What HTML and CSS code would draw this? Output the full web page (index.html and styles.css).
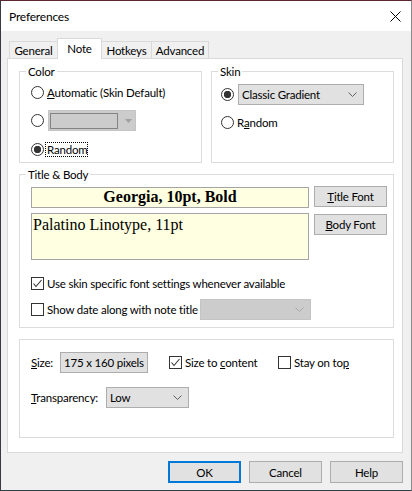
FILE: index.html
```html
<!DOCTYPE html>
<html>
<head>
<meta charset="utf-8">
<title>Preferences</title>
<link rel="stylesheet" href="styles.css">
</head>
<body>
<div class="window">
  <div class="titlebar">
    <span class="title">Preferences</span>
    <svg class="close" width="11" height="11" viewBox="0 0 11 11"><path d="M0.5 0.5L10.5 10.5M10.5 0.5L0.5 10.5" stroke="#000" stroke-width="1" fill="none"/></svg>
  </div>
  <div class="client">
    <div class="tabs">
      <div class="tab t-general">General</div>
      <div class="tab t-note active">Note</div>
      <div class="tab t-hotkeys">Hotkeys</div>
      <div class="tab t-advanced">Advanced</div>
    </div>
    <div class="panel">
      <div class="top-row">
        <div class="group g-color">
          <div class="legend">Color</div>
          <div class="opt r1"><span class="radio"></span><span class="lbl"><u>A</u>utomatic (Skin Default)</span></div>
          <div class="opt r2"><span class="radio"></span>
            <div class="combo-dis">
              <span class="swatch"></span>
              <svg class="tri" width="7" height="4" viewBox="0 0 7 4"><path d="M0 0H7L3.5 4Z" fill="#a0a0a0"/></svg>
            </div>
          </div>
          <div class="opt r3"><span class="radio checked"></span><span class="lbl focus">Random</span></div>
        </div>
        <div class="group g-skin">
          <div class="legend">Skin</div>
          <div class="opt s1"><span class="radio checked"></span>
            <div class="combo skin-combo"><span class="combo-text">Classic Gradient</span>
              <svg class="chev" width="9" height="5" viewBox="0 0 9 5"><path d="M0.5 0.5L4.5 4.5L8.5 0.5" stroke="#606060" fill="none"/></svg>
            </div>
          </div>
          <div class="opt s2"><span class="radio"></span><span class="lbl">R<u>a</u>ndom</span></div>
        </div>
      </div>

      <div class="group g-tb">
        <div class="legend">Title &amp; Body</div>
        <div class="tb-grid">
          <div class="field title-field">Georgia, 10pt, Bold</div>
          <button class="btn title-btn"><u>T</u>itle Font</button>
          <div class="field body-field">Palatino Linotype, 11pt</div>
          <button class="btn body-btn"><u>B</u>ody Font</button>
        </div>
        <div class="opt c1"><span class="check checked"><svg width="11" height="11" viewBox="0 0 11 11"><path d="M1.5 5.5L4 8.5L9.5 2" stroke="#333" stroke-width="1.1" fill="none"/></svg></span><span class="lbl">Use skin specific font settings whenever available</span></div>
        <div class="opt c2"><span class="check"></span><span class="lbl date-lbl">Show date along with note title</span>
          <div class="combo-off">
            <svg class="chev" width="9" height="5" viewBox="0 0 9 5"><path d="M0.5 0.5L4.5 4.5L8.5 0.5" stroke="#a8a8a8" fill="none"/></svg>
          </div>
        </div>
      </div>

      <div class="group g-misc">
        <div class="opt m1">
          <span class="mlabel size-label"><u>S</u>ize:</span>
          <div class="sizebox">175 x 160 pixels</div>
          <div class="citem ci1"><span class="check checked"><svg width="11" height="11" viewBox="0 0 11 11"><path d="M1.5 5.5L4 8.5L9.5 2" stroke="#333" stroke-width="1.1" fill="none"/></svg></span><span class="lbl">Size to <u>c</u>ontent</span></div>
          <div class="citem ci2"><span class="check"></span><span class="lbl">Stay on to<u>p</u></span></div>
        </div>
        <div class="opt m2">
          <span class="mlabel trans-label"><u>T</u>ransparency:</span>
          <div class="combo trans-combo"><span class="combo-text">Low</span>
            <svg class="chev" width="9" height="5" viewBox="0 0 9 5"><path d="M0.5 0.5L4.5 4.5L8.5 0.5" stroke="#606060" fill="none"/></svg>
          </div>
        </div>
      </div>
    </div>
    <div class="buttons">
      <button class="btn dlg default">OK</button>
      <button class="btn dlg">Cancel</button>
      <button class="btn dlg">Help</button>
    </div>
  </div>
</div>
</body>
</html>
```

FILE: styles.css
```css
* { box-sizing: border-box; }
html, body { margin: 0; padding: 0; background: #f0f0f0; }
body {
  font-family: Lato, "Segoe UI", "Liberation Sans", sans-serif;
  font-size: 11.5px;
  letter-spacing: -0.2px;
  color: #000;
}
u { text-decoration: underline; text-underline-offset: 1px; }

.window {
  width: 412px;
  height: 491px;
  border: 1px solid;
  border-color: #5a2630 #8a8a8a #2e4249 #3b3840;
  display: flex;
  flex-direction: column;
  background: #f0f0f0;
}

.titlebar {
  height: 30px;
  flex: none;
  background: #fff;
  display: flex;
  align-items: center;
  justify-content: space-between;
  padding: 0 10px 0 8px;
}
.title { font-size: 12px; }
.close { display: block; }

.client {
  flex: 1;
  display: flex;
  flex-direction: column;
  padding: 7px 8px 7px 6px;
}

.tabs {
  display: flex;
  align-items: flex-end;
  height: 20px;
  margin-left: 2px;
}
.tab {
  height: 17px;
  border: 1px solid #d9d9d9;
  border-bottom: none;
  background: #f0f0f0;
  display: flex;
  align-items: center;
  justify-content: center;
  padding-top: 1px;
  margin-left: -1px;
}
.t-general { width: 49px; margin-left: 0; }
.t-note { width: 45px; }
.t-hotkeys { width: 51px; }
.t-advanced { width: 58px; }
.tab.active {
  height: 21px;
  margin-bottom: -1px;
  background: #fff;
  position: relative;
  z-index: 1;
  padding-top: 0;
  padding-bottom: 2px;
}

.panel {
  background: #fff;
  border: 1px solid #d9d9d9;
  padding: 12px 8px 14px 11px;
  display: flex;
  flex-direction: column;
  gap: 11px;
}

.top-row { display: flex; gap: 9px; }

.group { border: 1px solid #dcdcdc; --pl: 11px; padding-left: var(--pl); }
.legend {
  margin: -7px 0 0 calc(6px - var(--pl));
  padding: 0 2px;
  background: #fff;
  width: fit-content;
  height: 14px;
  line-height: 14px;
}

.opt { display: flex; align-items: center; }
.lbl { margin-left: 3px; white-space: nowrap; }

.radio {
  width: 13px;
  height: 13px;
  flex: none;
  border: 1px solid #333;
  border-radius: 50%;
  background: #fff;
}
.radio.checked {
  background: radial-gradient(circle, #333 0 3.4px, #fff 4px);
}

.check {
  width: 13px;
  height: 13px;
  flex: none;
  border: 1px solid #333;
  background: #fff;
  display: flex;
  align-items: center;
  justify-content: center;
}
.check svg { display: block; }

/* Color group */
.g-color { width: 183px; height: 92px; }
.r1 { height: 16px; margin-top: 5px; }
.r2 { height: 21px; margin-top: 10px; }
.r3 { height: 16px; margin-top: 10px; }
.combo-dis {
  margin-left: 4px;
  width: 88px;
  height: 21px;
  background: #cccccc;
  border: 1px solid #c4c4c4;
  display: flex;
  align-items: center;
  padding-left: 1px;
}
.swatch {
  width: 68px;
  height: 16px;
  border: 1px solid #838383;
  background: #cccccc;
}
.tri { margin-left: 7px; display: block; }
.focus { outline: 1px dotted #000; outline-offset: 0; line-height: 13px; margin-left: 2px; padding-left: 1px; }

/* Skin group */
.g-skin { width: 183px; height: 92px; --pl: 9px; }
.s1 { height: 21px; margin-top: 5px; }
.s2 { height: 16px; margin-top: 9px; }

.combo {
  height: 21px;
  background: #e1e1e1;
  border: 1px solid #adadad;
  display: flex;
  align-items: center;
  justify-content: space-between;
  padding: 0 6px 0 3px;
}
.chev { display: block; }
.skin-combo { margin-left: 4px; width: 126px; }

/* Title & Body */
.g-tb { height: 154px; padding-right: 6px; }
.tb-grid {
  display: grid;
  grid-template-columns: 278px 73px;
  column-gap: 5px;
  row-gap: 5px;
  margin-top: 4px;
  align-items: start;
}
.field {
  background: #ffffe1;
  border: 1px solid #a5a5a5;
  font-family: "Liberation Serif", "Times New Roman", serif;
  letter-spacing: 0;
  color: #000;
}
.title-field {
  height: 21px;
  margin-top: 1px;
  font-weight: bold;
  font-size: 16px;
  display: flex;
  align-items: center;
  justify-content: center;
  padding-bottom: 1px;
}
.body-field {
  height: 47px;
  font-size: 16px;
  line-height: 17px;
  padding: 2px 0 0 1px;
}
.btn {
  font-family: inherit;
  font-size: 11.5px;
  letter-spacing: -0.2px;
  color: #000;
  background: #e1e1e1;
  border: 1px solid #adadad;
  padding: 0;
  margin: 0;
  height: 21px;
}
.title-btn { width: 73px; }
.body-btn { width: 73px; margin-top: 1px; }

.c1 { height: 16px; margin-top: 15px; }
.c2 { height: 21px; margin-top: 8px; }
.date-lbl { width: 150px; }
.combo-off {
  margin-left: 3px;
  width: 111px;
  height: 21px;
  background: #cccccc;
  border: 1px solid #c4c4c4;
  display: flex;
  align-items: center;
  justify-content: flex-end;
  padding-right: 6px;
}

/* misc group */
.g-misc { height: 99px; padding-top: 12px; }
.m1 { height: 21px; }
.m2 { height: 21px; margin-top: 14px; }
.mlabel { white-space: nowrap; }
.size-label { width: 29px; }
.sizebox {
  width: 88px;
  height: 21px;
  background: #e1e1e1;
  border: 1px solid #adadad;
  display: flex;
  align-items: center;
  justify-content: center;
  white-space: nowrap;
}
.citem { display: flex; align-items: center; }
.ci1 { margin-left: 21px; width: 109px; }
.trans-label { width: 75px; }
.trans-combo { width: 83px; }

/* dialog buttons */
.buttons {
  display: flex;
  justify-content: flex-end;
  gap: 8px;
  margin-top: 8px;
}
.dlg { width: 73px; height: 22px; }
.dlg.default { border: 2px solid #0078d7; }
```
